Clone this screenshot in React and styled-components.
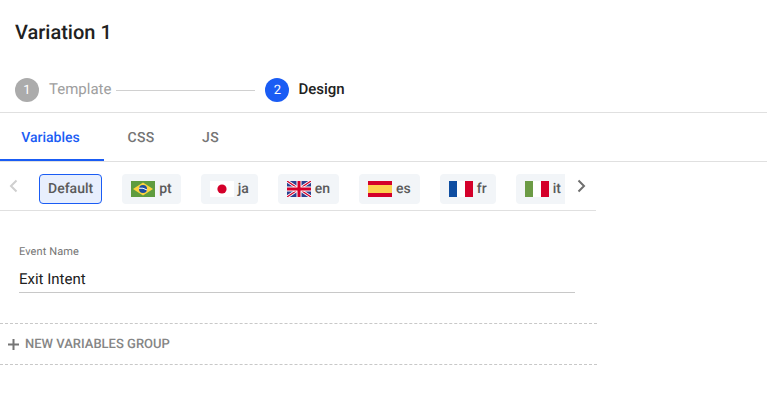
import React from "react";
import styled, { createGlobalStyle } from "styled-components";

const Global = createGlobalStyle`
  html, body { margin: 0; padding: 0; background: #fff; }
  body { font-family: Roboto, "Liberation Sans", sans-serif; color: #212121; text-rendering: geometricPrecision; }
`;
const Page = styled.div`width: 767px; height: 420px; overflow: hidden;`;
const Title = styled.h1`
  margin: 0; height: 64px; padding-left: 15px; display: flex; align-items: center;
  font-size: 20px; font-weight: 500; color: #212121;
`;
const Stepper = styled.div`
  box-sizing: content-box; height: 34px; padding: 14px 0 0 15px; display: flex; align-items: flex-start;
  border-bottom: 1px solid #e0e0e0;
`;
const Step = styled.div`display: flex; align-items: center; height: 24px;`;
const Circle = styled.span`
  width: 24px; height: 24px; border-radius: 50%; display: flex; align-items: center; justify-content: center;
  font-size: 13px; color: #fff; background: ${p => p.$active ? "#1a5cf4" : "#ababab"};
`;
const StepLabel = styled.span`
  margin-left: ${p => p.$active ? 9 : 10}px; font-size: 15px; line-height: 22px; padding-bottom: 2px;
  font-weight: ${p => p.$active ? 500 : 400}; color: ${p => p.$active ? "#212121" : "#9e9e9e"};
`;
const Connector = styled.span`
  width: 139px; height: 1px; background: #d0d0d0; margin: 0 10px 0 5px;
`;
const Tabs = styled.div`display: flex; height: 48px; border-bottom: 1px solid #e0e0e0;`;
const Tab = styled.div`
  width: ${p => p.$w}px; box-sizing: border-box; height: 48px; display: flex; align-items: center; justify-content: center;
  font-size: 14px; font-weight: 500; padding: 3px 3px 0 0;
  letter-spacing: ${p => p.$active ? 0 : 0.3}px;
  color: ${p => p.$active ? "#1a5cf4" : "#757575"};
  border-bottom: 2px solid ${p => p.$active ? "#1a5cf4" : "transparent"};
`;
const LangBar = styled.div`
  width: 596px; height: 48px; display: flex; align-items: center; border-bottom: 1px solid #e0e0e0;
`;
const Arrow = styled.div`
  width: ${p => p.$w}px; display: flex; justify-content: center; color: ${p => p.$on ? "#6e6e6e" : "#cfcfcf"};
`;
const Scroller = styled.div`
  width: 526px; display: flex; gap: 20px; overflow: hidden; margin-top: 6px;
`;
const Chip = styled.div`
  flex: none; height: 30px; box-sizing: border-box; padding: 0 ${p => p.$active ? 8 : 9}px; border-radius: 4px; display: flex; align-items: center; gap: 4px;
  font-size: 14px; font-weight: 500; color: #5a5a5a;
  background: ${p => p.$active ? "#e8effd" : "#f2f5f8"};
  border: ${p => p.$active ? "1px solid #1a5cf4" : "none"};
`;
const Flag = styled.svg`width: 24px; height: 16px; flex: none; display: block;`;
const Field = styled.div`
  padding: 34px 21px 30px 19px; width: 556px; box-sizing: content-box;
`;
const FieldLabel = styled.div`font-size: 11px; line-height: 13px; color: #757575; letter-spacing: 0.1px;`;
const FieldValue = styled.div`
  margin-top: 11px; height: 24px; line-height: 20px; box-sizing: border-box; border-bottom: 1px solid #c8c8c8;
  font-size: 15px; color: #212121;
`;
const Group = styled.div`
  width: 597px; height: 42px; border-top: 1px dashed #c8c8c8; border-bottom: 1px dashed #c8c8c8;
  display: flex; align-items: center; padding-left: 8px; box-sizing: border-box; gap: 6px;
  font-size: 13px; font-weight: 500; color: #858585;
`;
const PlusIcon = styled.svg`width: 11px; height: 11px; display: block;`;

const Chevron = ({ right }) => (
  <svg width="12" height="14" viewBox="0 0 12 14" fill="none" stroke="currentColor" strokeWidth="2">
    <path d={right ? "M3.5 1.5 L9 7 L3.5 12.5" : "M8.5 1.5 L3 7 L8.5 12.5"} />
  </svg>
);

const flags = {
  pt: (
    <>
      <rect width="24" height="16" fill="#5f9c3f" />
      <path d="M12 1.5 L22 8 L12 14.5 L2 8 Z" fill="#fdd33f" />
      <circle cx="12" cy="8" r="4" fill="#1f4e9e" />
      <path d="M8 7.2 Q12 6.4 16 9" stroke="#fff" strokeWidth="1" fill="none" />
    </>
  ),
  ja: (
    <>
      <rect width="24" height="16" fill="#fff" />
      <circle cx="12" cy="8" r="4.6" fill="#d4002a" />
    </>
  ),
  en: (
    <>
      <rect width="24" height="16" fill="#2b3f8f" />
      <path d="M0 0 L24 16 M24 0 L0 16" stroke="#fff" strokeWidth="3" />
      <path d="M0 0 L24 16 M24 0 L0 16" stroke="#d4002a" strokeWidth="1.2" />
      <path d="M12 0 V16 M0 8 H24" stroke="#fff" strokeWidth="5" />
      <path d="M12 0 V16 M0 8 H24" stroke="#d4002a" strokeWidth="3" />
    </>
  ),
  es: (
    <>
      <rect width="24" height="16" fill="#d4002a" />
      <rect y="4" width="24" height="8" fill="#fdd04f" />
    </>
  ),
  fr: (
    <>
      <rect width="8" height="16" fill="#0f4ea1" />
      <rect x="8" width="8" height="16" fill="#fff" />
      <rect x="16" width="8" height="16" fill="#d4002a" />
    </>
  ),
  it: (
    <>
      <rect width="8" height="16" fill="#6c9b45" />
      <rect x="8" width="8" height="16" fill="#fff" />
      <rect x="16" width="8" height="16" fill="#d4002a" />
    </>
  ),
};

const langs = ["pt", "ja", "en", "es", "fr", "it"];

export default function App() {
  return (
    <Page>
      <Global />
      <Title>Variation 1</Title>
      <Stepper>
        <Step>
          <Circle>1</Circle>
          <StepLabel>Template</StepLabel>
        </Step>
        <Step>
          <Connector />
        </Step>
        <Step>
          <Circle $active>2</Circle>
          <StepLabel $active>Design</StepLabel>
        </Step>
      </Stepper>
      <Tabs>
        <Tab $w={104} $active>Variables</Tab>
        <Tab $w={77}>CSS</Tab>
        <Tab $w={62}>JS</Tab>
      </Tabs>
      <LangBar>
        <Arrow $w={27}><Chevron /></Arrow>
        <Arrow $w={12} />
        <Scroller>
          <Chip $active>Default</Chip>
          {langs.map(l => (
            <Chip key={l}>
              <Flag viewBox="0 0 24 16">{flags[l]}</Flag>
              {l}
            </Chip>
          ))}
        </Scroller>
        <Arrow $w={31} $on><Chevron right /></Arrow>
      </LangBar>
      <Field>
        <FieldLabel>Event Name</FieldLabel>
        <FieldValue>Exit Intent</FieldValue>
      </Field>
      <Group>
        <PlusIcon viewBox="0 0 11 11"><path d="M5.5 0 V11 M0 5.5 H11" stroke="#757575" strokeWidth="2" /></PlusIcon>
        NEW VARIABLES GROUP
      </Group>
    </Page>
  );
}
